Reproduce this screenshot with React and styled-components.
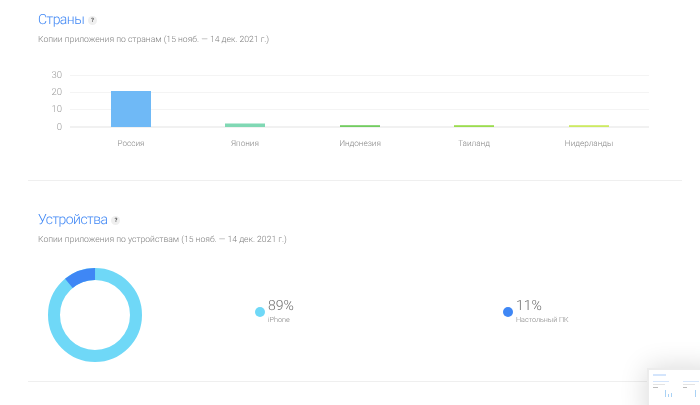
import React from "react";
import styled, { createGlobalStyle } from "styled-components";

const GlobalStyle = createGlobalStyle`
  html, body {
    margin: 0;
    padding: 0;
    width: 700px;
    height: 405px;
    overflow: hidden;
    background: #fff;
    font-family: Roboto, "Liberation Sans", sans-serif;
    text-rendering: geometricPrecision;
  }
`;

const Page = styled.div`
  position: relative;
  width: 700px;
  height: 405px;
  overflow: hidden;
  filter: blur(0.35px);
`;

const Section = styled.section`
  margin: 0 18px 0 28px;
  padding: ${(p) => p.$pad};
  height: ${(p) => p.$height}px;
  box-sizing: border-box;
  border-bottom: 1px solid #efefef;
`;

const TitleRow = styled.div`
  display: flex;
  align-items: center;
  gap: 4px;
  height: 18px;
`;

const Title = styled.h2`
  margin: 0;
  font-size: 14px;
  font-weight: 300;
  color: #3f87f5;
  line-height: 18px;
  letter-spacing: -0.55px;
`;

const Help = styled.span`
  width: 9px;
  height: 9px;
  border-radius: 50%;
  background: #efefef;
  color: #555;
  font-size: 6px;
  font-weight: 700;
  line-height: 9px;
  text-align: center;
`;

const Subtitle = styled.p`
  margin: ${(p) => p.$top}px 0 0;
  font-size: 8.6px;
  line-height: 12px;
  font-weight: 300;
  color: #808080;
`;

const ChartSvg = styled.svg`
  display: block;
  margin: 14px 0 0 -38px;
`;

const AxisText = styled.text`
  font-size: 9.5px;
  font-weight: 300;
  fill: #9a9a9a;
`;

const CategoryText = styled.text`
  font-size: 8.2px;
  font-weight: 300;
  fill: #858585;
  text-anchor: middle;
`;

const DeviceRow = styled.div`
  display: flex;
  align-items: center;
  margin: 22px 0 0 10px;
`;

const Donut = styled.svg`
  display: block;
  flex: none;
  margin-right: 113px;
`;

const LegendItem = styled.div`
  display: flex;
  align-items: flex-start;
  gap: 3px;
  width: 248px;
  flex: none;
  margin-top: -7px;
`;

const Dot = styled.span`
  width: 10px;
  height: 10px;
  border-radius: 50%;
  background: ${(p) => p.$color};
  flex: none;
  margin-top: 9px;
`;

const LegendText = styled.div`
  display: flex;
  flex-direction: column;
`;

const Percent = styled.span`
  font-size: 14px;
  font-weight: 300;
  line-height: 16px;
  color: #707070;
`;

const DeviceName = styled.span`
  font-size: 7.2px;
  font-weight: 300;
  line-height: 10px;
  padding-top: 1px;
  color: #858585;
`;

const Thumb = styled.div`
  position: absolute;
  left: 647px;
  top: 368px;
  width: 70px;
  height: 50px;
  box-sizing: border-box;
  background: #fff;
  border: 2px solid #ececec;
  box-shadow: 0 0 28px rgba(0, 0, 0, 0.16);
  padding: 4px 4px;
`;

const ThumbTitle = styled.div`
  width: 13px;
  height: 2px;
  background: #d4e5fc;
`;

const ThumbColumns = styled.div`
  display: flex;
  gap: 11px;
  margin-top: 5px;
`;

const ThumbColumn = styled.div`
  width: 19px;
  flex: none;
`;

const ThumbLine = styled.div`
  height: 1px;
  width: ${(p) => p.$w}px;
  margin-bottom: 2px;
  background: ${(p) => p.$color};
`;

const ThumbBars = styled.div`
  display: flex;
  align-items: flex-end;
  gap: 2px;
  height: 7px;
  margin: 1px 0 0 ${(p) => p.$left}px;
`;

const ThumbBar = styled.div`
  width: 1px;
  height: ${(p) => p.$h}px;
  background: #a9d2f5;
`;

const gridY = [75, 92, 109];
const ticks = [
  { label: "30", y: 78 },
  { label: "20", y: 95 },
  { label: "10", y: 112 },
  { label: "0", y: 130 },
];
const countries = [
  { name: "Россия", x: 111, h: 36, color: "#6fb9f6" },
  { name: "Япония", x: 225, h: 3.5, color: "#80d8b4" },
  { name: "Индонезия", x: 340, h: 1.8, color: "#72cc60" },
  { name: "Таиланд", x: 454, h: 1.8, color: "#9bdc4e" },
  { name: "Нидерланды", x: 569, h: 1.8, color: "#cdea62" },
];

const devices = [
  { percent: "89%", name: "iPhone", color: "#6fd8f7" },
  { percent: "11%", name: "Настольный ПК", color: "#3f87f5" },
];

const DONUT_R = 41;
const DONUT_LEN = 2 * Math.PI * DONUT_R;

export default function App() {
  return (
    <Page>
      <GlobalStyle />
      <Section $pad="11px 0 0 10px" $height={181}>
        <TitleRow>
          <Title>Страны</Title>
          <Help>?</Help>
        </TitleRow>
        <Subtitle $top={5}>Копии приложения по странам (15 нояб. — 14 дек. 2021 г.)</Subtitle>
        <ChartSvg width="672" height="90" viewBox="0 60 672 90">
          {gridY.map((y) => (
            <line key={y} x1="70" x2="649" y1={y + 0.5} y2={y + 0.5} stroke="#f4f4f4" />
          ))}
          <line x1="70" x2="649" y1="127" y2="127" stroke="#ededed" strokeWidth="1.6" />
          {ticks.map((t) => (
            <AxisText key={t.label} x="62" y={t.y} textAnchor="end">
              {t.label}
            </AxisText>
          ))}
          {countries.map((c) => (
            <g key={c.name}>
              <rect x={c.x} y={127 - c.h} width="40" height={c.h} fill={c.color} />
              <CategoryText x={c.x + 20} y="146">
                {c.name}
              </CategoryText>
            </g>
          ))}
        </ChartSvg>
      </Section>
      <Section $pad="30px 0 0 10px" $height={201}>
        <TitleRow>
          <Title>Устройства</Title>
          <Help>?</Help>
        </TitleRow>
        <Subtitle $top={5}>Копии приложения по устройствам (15 нояб. — 14 дек. 2021 г.)</Subtitle>
        <DeviceRow>
          <Donut width="94" height="94" viewBox="0 0 94 94">
            <circle cx="47" cy="47" r={DONUT_R} fill="none" stroke="#6fd8f7" strokeWidth="12" />
            <circle
              cx="47"
              cy="47"
              r={DONUT_R}
              fill="none"
              stroke="#3f87f5"
              strokeWidth="12"
              strokeDasharray={`${DONUT_LEN * 0.11} ${DONUT_LEN}`}
              transform={`rotate(${-90 - 0.11 * 360} 47 47)`}
            />
          </Donut>
          {devices.map((d) => (
            <LegendItem key={d.name}>
              <Dot $color={d.color} />
              <LegendText>
                <Percent>{d.percent}</Percent>
                <DeviceName>{d.name}</DeviceName>
              </LegendText>
            </LegendItem>
          ))}
        </DeviceRow>
      </Section>
      <Thumb>
        <ThumbTitle />
        <ThumbColumns>
          <ThumbColumn>
            <ThumbLine $w={16} $color="#d4e5fc" />
            <ThumbLine $w={12} $color="#e4e4e4" />
            <ThumbLine $w={5} $color="#bbbbbb" />
            <ThumbBars $left={12}>
              <ThumbBar $h={7} />
              <ThumbBar $h={3} />
              <ThumbBar $h={4} />
            </ThumbBars>
          </ThumbColumn>
          <ThumbColumn>
            <ThumbLine $w={16} $color="#d4e5fc" />
            <ThumbLine $w={12} $color="#e4e4e4" />
            <ThumbLine $w={4} $color="#bbbbbb" />
            <ThumbBars $left={12}>
              <ThumbBar $h={7} />
            </ThumbBars>
          </ThumbColumn>
        </ThumbColumns>
      </Thumb>
    </Page>
  );
}
